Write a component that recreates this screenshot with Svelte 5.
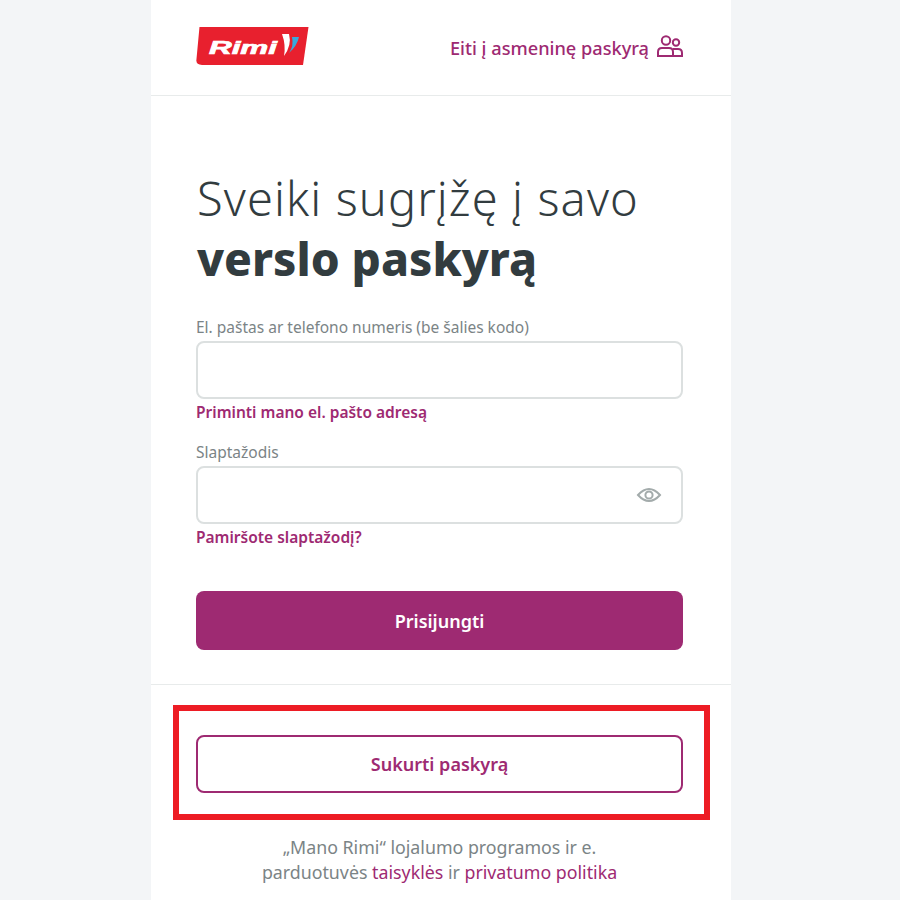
<script lang="ts">
    let email = $state("");
    let password = $state("");
</script>

<div class="panel">
    <header class="top">
        <svg class="logo" width="113" height="40" viewBox="0 0 113 40" aria-label="Rimi">
            <path d="M3.5 1 H112.5 L107 39 H6 Q0 39 0.4 34 Z" fill="#e8202e" />
            <text x="13" y="27.5" class="logo-text" textLength="68" lengthAdjust="spacingAndGlyphs">Rimi</text>
            <path d="M86 8 H93 Q96 19 88 30 Q90 19 86 8 Z" fill="#fff" />
            <path d="M96 11 H103 Q101 20 93 27 Q98 20 96 11 Z" fill="#39a9dc" />
        </svg>
        <a class="account" href="#a">
            Eiti į asmeninę paskyrą
            <svg class="people" width="27" height="22" viewBox="0 0 27 22" fill="none" stroke="#9e2a72" stroke-width="2">
                <circle cx="10" cy="5.5" r="4.2" />
                <circle cx="20" cy="7.5" r="3.2" />
                <path d="M2 21 V17 Q2 13 6 13 H13 Q17 13 17 17 V21 Z" />
                <path d="M17 14 H22 Q26 14 26 18 V21 H17" />
            </svg>
        </a>
    </header>

    <main class="form">
        <h1>Sveiki sugrįžę į savo <strong>verslo paskyrą</strong></h1>

        <label for="email">El. paštas ar telefono numeris (be šalies kodo)</label>
        <input id="email" type="text" bind:value={email} />
        <a class="hint" href="#a">Priminti mano el. pašto adresą</a>

        <label class="second" for="password">Slaptažodis</label>
        <div class="field">
            <input id="password" type="password" bind:value={password} />
            <svg class="eye" width="26" height="18" viewBox="0 0 26 18" fill="none" stroke="#a3abab" stroke-width="2">
                <path d="M2 9 Q13 -3 24 9 Q13 21 2 9 Z" />
                <circle cx="13" cy="9" r="3.6" />
            </svg>
        </div>
        <a class="hint" href="#a">Pamiršote slaptažodį?</a>

        <button class="primary">Prisijungti</button>
    </main>

    <section class="bottom">
        <div class="marked">
            <button class="outline">Sukurti paskyrą</button>
        </div>
        <p class="terms">
            „Mano Rimi“ lojalumo programos ir e.<br />
            parduotuvės <a href="#a">taisyklės</a> ir <a href="#a">privatumo politika</a>
        </p>
    </section>
</div>

<style>
    :global(body) {
        background: #f3f5f7;
        font-family: "Noto Sans", Lato, sans-serif;
    }

    .panel {
        width: 580px;
        height: 900px;
        margin-left: 151px;
        background: #fff;
        overflow: hidden;
    }

    .top {
        height: 96px;
        box-sizing: border-box;
        padding: 0 48px 0 45px;
        display: flex;
        align-items: center;
        justify-content: space-between;
        border-bottom: 1px solid #e8ebeb;
    }

    .logo {
        margin-top: -3px;
    }

    .logo-text {
        font: italic 900 18px "Liberation Sans", sans-serif;
        fill: #fff;
        stroke: #fff;
        stroke-width: 0.7;
    }

    .account {
        display: flex;
        align-items: center;
        gap: 7px;
        font-size: 18.2px;
        font-weight: 500;
        color: #9e2a72;
        text-decoration: none;
    }

    .people {
        margin-top: -4px;
    }

    .form {
        padding: 72px 48px 34px 45px;
        display: flex;
        flex-direction: column;
        border-bottom: 1px solid #e8ebeb;
    }

    h1 {
        margin: 0 0 29px 1px;
        font-size: 47px;
        line-height: 60px;
        font-weight: 300;
        letter-spacing: 1.1px;
        color: #323c3f;
    }

    h1 strong {
        display: block;
        font-size: 46px;
        font-weight: 800;
        letter-spacing: 0;
    }

    label {
        font-size: 15.5px;
        line-height: 20px;
        color: #7b8486;
        margin-bottom: 4px;
    }

    label.second {
        margin-top: 20px;
    }

    input {
        width: 100%;
        height: 58px;
        box-sizing: border-box;
        border: 2px solid #dce0e0;
        border-radius: 8px;
        background: #fff;
        outline: none;
    }

    .field {
        position: relative;
    }

    .eye {
        position: absolute;
        right: 21px;
        top: 20px;
    }

    .hint {
        margin-top: 3px;
        font-size: 15.5px;
        line-height: 20px;
        font-weight: 600;
        color: #9e2a72;
        text-decoration: none;
    }

    button {
        width: 100%;
        font-family: inherit;
        font-size: 18px;
        font-weight: 600;
        border-radius: 8px;
        cursor: pointer;
    }

    .primary {
        height: 59px;
        margin-top: 44px;
        border: none;
        background: #9e2a72;
        color: #fff;
    }

    .bottom {
        padding: 50px 48px 0 45px;
    }

    .marked {
        position: relative;
    }

    .marked::after {
        content: "";
        position: absolute;
        inset: -30px -27px -27px -23px;
        border: 6px solid #ed1c24;
        pointer-events: none;
    }

    .outline {
        height: 58px;
        border: 2px solid #9e2a72;
        background: #fff;
        color: #9e2a72;
    }

    .terms {
        margin: 42px 0 0;
        text-align: center;
        font-size: 17.8px;
        line-height: 25px;
        color: #7b8486;
    }

    .terms a {
        color: #9e2a72;
        text-decoration: none;
    }
</style>
